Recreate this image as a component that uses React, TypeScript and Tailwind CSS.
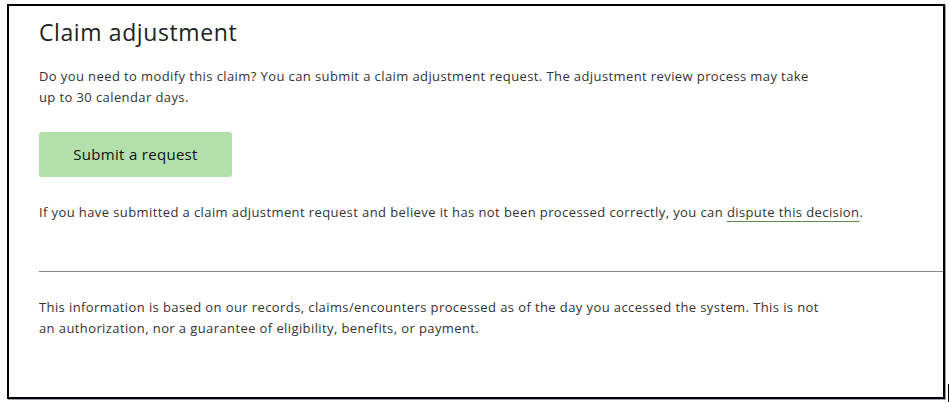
import React from 'react';

const App: React.FC = () => {
  return (
    <div className="relative h-[402px] w-[950px] bg-white" style={{ fontFamily: '"Open Sans", "Liberation Sans", sans-serif' }}>
      <div className="ml-[7px] mt-[4px] h-[395px] w-[938px] border-2 border-black shadow-[1px_1px_0_#9ca3af] pt-[12px]">
        <div className="pl-[30px]">
          <h2 className="text-[23px] leading-[28px] tracking-[0.6px] text-[#222]">Claim adjustment</h2>
          <p className="mt-[20px] max-w-[782px] text-[13px] leading-[21px] tracking-[0.4px] text-[#333]">
            Do you need to modify this claim? You can submit a claim adjustment request. The adjustment review process may take up to 30 calendar days.
          </p>
          <button className="mt-[24px] h-[45px] w-[193px] rounded-[3px] bg-[#b3dfaa] text-[15px] font-medium tracking-[0.3px] text-[#111]">
            Submit a request
          </button>
          <p className="mt-[25px] text-[13px] leading-[21px] tracking-[0.4px] text-[#333]">
            If you have submitted a claim adjustment request and believe it has not been processed correctly, you can{' '}
            <a href="#" className="underline decoration-[#5a8f4a] underline-offset-[4px]">dispute this decision</a>.
          </p>
        </div>
        <div className="ml-[30px] mt-[48px] h-px bg-[#8a8a8a]" />
        <p className="mt-[25px] max-w-[825px] pl-[30px] text-[13px] leading-[21px] tracking-[0.4px] text-[#333]">
          This information is based on our records, claims/encounters processed as of the day you accessed the system. This is not an authorization, nor a guarantee of eligibility, benefits, or payment.
        </p>
      </div>
      <div className="absolute left-[948px] top-[380px] h-[22px] w-px bg-black" />
    </div>
  );
};

export default App;
